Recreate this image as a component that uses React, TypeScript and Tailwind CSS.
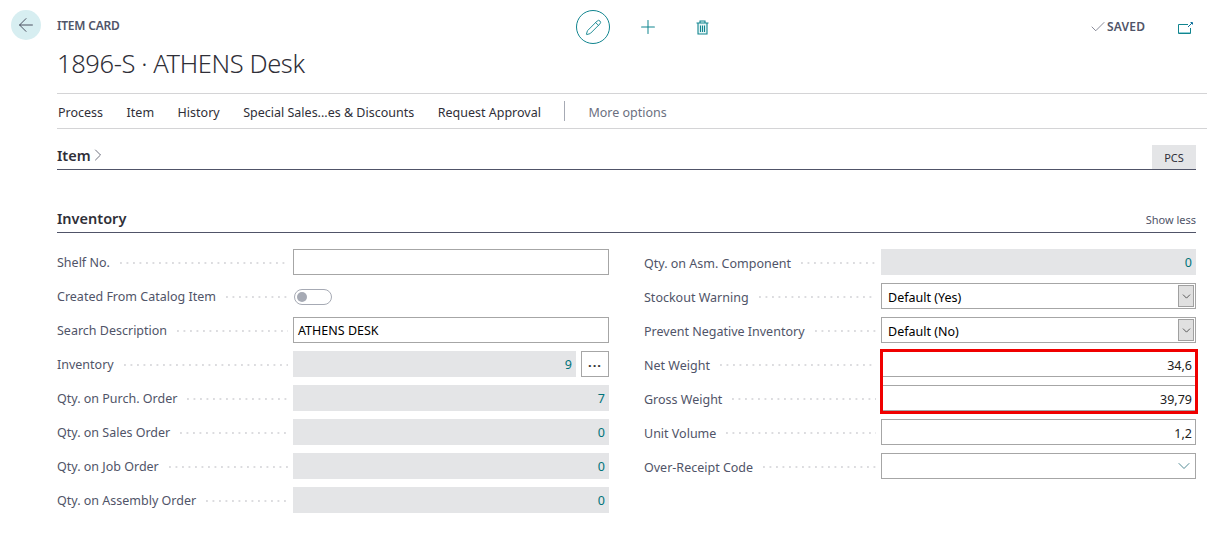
import { ArrowLeft, Check, ChevronDown, ChevronRight, Pencil, Plus } from 'lucide-react';

const leftFields = [
  { label: 'Shelf No.', kind: 'input', value: '' },
  { label: 'Created From Catalog Item', kind: 'toggle', value: '' },
  { label: 'Search Description', kind: 'input', value: 'ATHENS DESK' },
  { label: 'Inventory', kind: 'lookup', value: '9' },
  { label: 'Qty. on Purch. Order', kind: 'readonly', value: '7' },
  { label: 'Qty. on Sales Order', kind: 'readonly', value: '0' },
  { label: 'Qty. on Job Order', kind: 'readonly', value: '0' },
  { label: 'Qty. on Assembly Order', kind: 'readonly', value: '0' },
];

const rightFields = [
  { label: 'Qty. on Asm. Component', kind: 'readonly', value: '0' },
  { label: 'Stockout Warning', kind: 'select', value: 'Default (Yes)' },
  { label: 'Prevent Negative Inventory', kind: 'select', value: 'Default (No)' },
  { label: 'Net Weight', kind: 'number', value: '34,6' },
  { label: 'Gross Weight', kind: 'number', value: '39,79' },
  { label: 'Unit Volume', kind: 'number', value: '1,2' },
  { label: 'Over-Receipt Code', kind: 'dropdown', value: '' },
];

const menuItems = ['Process', 'Item', 'History', 'Special Sales...es & Discounts', 'Request Approval'];

function FieldControl({ kind, value }: { kind: string; value: string }) {
  if (kind === 'toggle') {
    return (
      <div className="flex h-[26px] items-center pl-px pt-[1px]">
        <div className="flex h-[16px] w-[38px] items-center rounded-full border border-[#a6aab4] bg-white pl-[2px]">
          <span className="h-[10px] w-[10px] rounded-full bg-[#a6aab4]" />
        </div>
      </div>
    );
  }
  if (kind === 'readonly') {
    return (
      <div className="flex h-[26px] items-center justify-end bg-[#e4e5e7] pr-[4px] pt-[3px] text-[#00737a]">{value}</div>
    );
  }
  if (kind === 'lookup') {
    return (
      <div className="flex h-[26px] gap-[5px]">
        <div className="flex flex-1 items-center justify-end bg-[#e4e5e7] pr-[4px] pt-[3px] text-[#00737a]">{value}</div>
        <div className="flex w-[28px] items-center justify-center border border-[#a6a6a6] pb-[2px] text-[13px] font-bold tracking-[1px] text-[#333]">
          ...
        </div>
      </div>
    );
  }
  if (kind === 'select') {
    return (
      <div className="flex h-[26px] items-center border border-[#a6a6a6] pl-[6px] text-black">
        <span className="flex-1 pt-[4px]">{value}</span>
        <span className="mr-px flex h-[22px] w-[16px] items-center justify-center border border-[#a0a0a0] bg-[#e0e0e0]">
          <ChevronDown size={13} strokeWidth={1.6} className="text-[#444]" />
        </span>
      </div>
    );
  }
  if (kind === 'dropdown') {
    return (
      <div className="flex h-[26px] items-center justify-end border border-[#a6a6a6] pr-px">
        <ChevronDown size={20} strokeWidth={1} className="text-[#2f7480]" />
      </div>
    );
  }
  if (kind === 'number') {
    return (
      <div className="flex h-[26px] items-center justify-end border border-[#a6a6a6] pr-[3px] pt-[5px] text-[#212121]">
        {value}
      </div>
    );
  }
  return <div className="flex h-[26px] items-center border border-[#a6a6a6] pl-[4px] pt-[2px] text-black">{value}</div>;
}

function FieldRow({
  label,
  kind,
  value,
  controlWidth,
  labelPad,
}: {
  label: string;
  kind: string;
  value: string;
  controlWidth: string;
  labelPad: string;
}) {
  return (
    <div className="flex h-[26px] items-center">
      <div className="flex min-w-0 flex-1 items-center pr-[5px]">
        <span className={`whitespace-nowrap text-[#505468] ${labelPad}`}>{label}</span>
        <span className="ml-[10px] mt-[2px] h-[2px] flex-1 bg-[linear-gradient(to_right,#dcdcdf_2px,transparent_2px)] bg-[length:6.5px_2px]" />
      </div>
      <div className={controlWidth}>
        <FieldControl kind={kind} value={value} />
      </div>
    </div>
  );
}

export default function App() {
  return (
    <div
      className="relative flex h-[547px] w-[1207px] overflow-hidden bg-white text-[12.5px]"
      style={{ fontFamily: '"Noto Sans", sans-serif' }}
    >
      {/* Back button */}
      <div className="w-[57px] shrink-0 pl-[11px] pt-[10px]">
        <div className="flex h-[30px] w-[30px] items-center justify-center rounded-full bg-[#d7eef1]">
          <ArrowLeft size={22} strokeWidth={1} className="text-[#3f4354]" />
        </div>
      </div>

      <div className="min-w-0 flex-1">
        {/* Header */}
        <div className="flex h-[94px] border-b border-[#d4d4d6]">
          <div className="w-[519px] shrink-0">
            <div className="mt-[17px] h-[18px] text-[12px] font-semibold leading-[18px] tracking-[-0.2px] text-[#505468]">ITEM CARD</div>
            <div className="mt-[8px] whitespace-nowrap text-[25.5px] font-light leading-[40px] tracking-[-0.4px] text-[#2f2f38]">
              1896-S · ATHENS Desk
            </div>
          </div>
          <div className="flex h-[54px] w-[515px] shrink-0 items-center">
            <div className="flex h-[34px] w-[34px] items-center justify-center rounded-full border border-[#11858f]">
              <Pencil size={17} strokeWidth={1.3} className="text-[#11858f]" />
            </div>
            <Plus size={22} strokeWidth={1.1} className="ml-[27px] text-[#11858f]" />
            <svg width="13" height="15" viewBox="0 0 13 15" fill="#e6f6f7" stroke="#11858f" strokeWidth="1.1" className="ml-[37px]">
              <path d="M.5 3h12M4 3V1h5v2M2 3v11h9V3z" />
              <path d="M4.5 5.5v6.5M6.5 5.5v6.5M8.5 5.5v6.5" />
            </svg>
          </div>
          <div className="flex h-[54px] flex-1 items-center">
            <Check size={18} strokeWidth={0.9} className="-ml-[2px] text-[#505468]" />
            <span className="text-[12px] font-semibold tracking-[0.2px] text-[#505468]">SAVED</span>
            <svg width="15" height="12" viewBox="0 0 15 12" fill="none" stroke="#11858f" strokeWidth="1" className="ml-[33px] mt-[2px]">
              <path d="M10 2.5H.5v9h12V6" />
              <path d="M1 10.5h11" stroke="#8fd0d6" />
              <path d="M10 5l4-4M12.5.5h2v2" stroke="#0b6f9a" />
            </svg>
          </div>
        </div>

        {/* Menu */}
        <div className="flex h-[35px] items-center border-b border-[#d4d4d6] pl-px pt-[4px] text-[#2f2f38]">
          {menuItems.map((item) => (
            <span key={item} className="mr-[23.5px] whitespace-nowrap">
              {item}
            </span>
          ))}
          <span className="-mt-[4px] h-[20px] w-px bg-[#a6aab4]" />
          <span className="ml-[23px] text-[#6b6f80]">More options</span>
        </div>

        <div className="mr-[11px]">
          {/* Item section */}
          <div className="mt-[16px] flex h-[25px] items-end justify-between border-b border-[#505468]">
            <div className="flex items-center pb-[4px] text-[14.5px] font-semibold leading-[20px] text-[#2f2f38]">
              Item
              <ChevronRight size={20} strokeWidth={0.9} className="-ml-[3px] text-[#3f4354]" />
            </div>
            <div className="flex h-[24px] w-[44px] items-center justify-center bg-[#e4e5e7] pt-[2px] text-[11px] text-[#2f2f38]">
              PCS
            </div>
          </div>

          {/* Inventory section */}
          <div className="mt-[38px] flex h-[25px] items-end justify-between border-b border-[#505468] pb-[4px]">
            <span className="text-[14.5px] font-semibold leading-[20px] text-[#2f2f38]">Inventory</span>
            <span className="text-[11px] text-[#505468]">Show less</span>
          </div>

          <div className="mt-[16px] flex gap-[35px]">
            <div className="flex w-[552px] shrink-0 flex-col gap-[8px]">
              {leftFields.map((f) => (
                <FieldRow key={f.label} label={f.label} kind={f.kind} value={f.value} controlWidth="w-[316px] shrink-0" labelPad="pt-[3px]" />
              ))}
            </div>
            <div className="flex flex-1 flex-col gap-[8px]">
              {rightFields.map((f) => (
                <FieldRow key={f.label} label={f.label} kind={f.kind} value={f.value} controlWidth="w-[315px] shrink-0" labelPad="pt-[5px]" />
              ))}
            </div>
          </div>
        </div>
      </div>

      {/* Red highlight over the weight fields */}
      <div className="pointer-events-none absolute left-[880px] top-[349px] h-[65px] w-[318px] border-[3px] border-[#f00000]" />
    </div>
  );
}
